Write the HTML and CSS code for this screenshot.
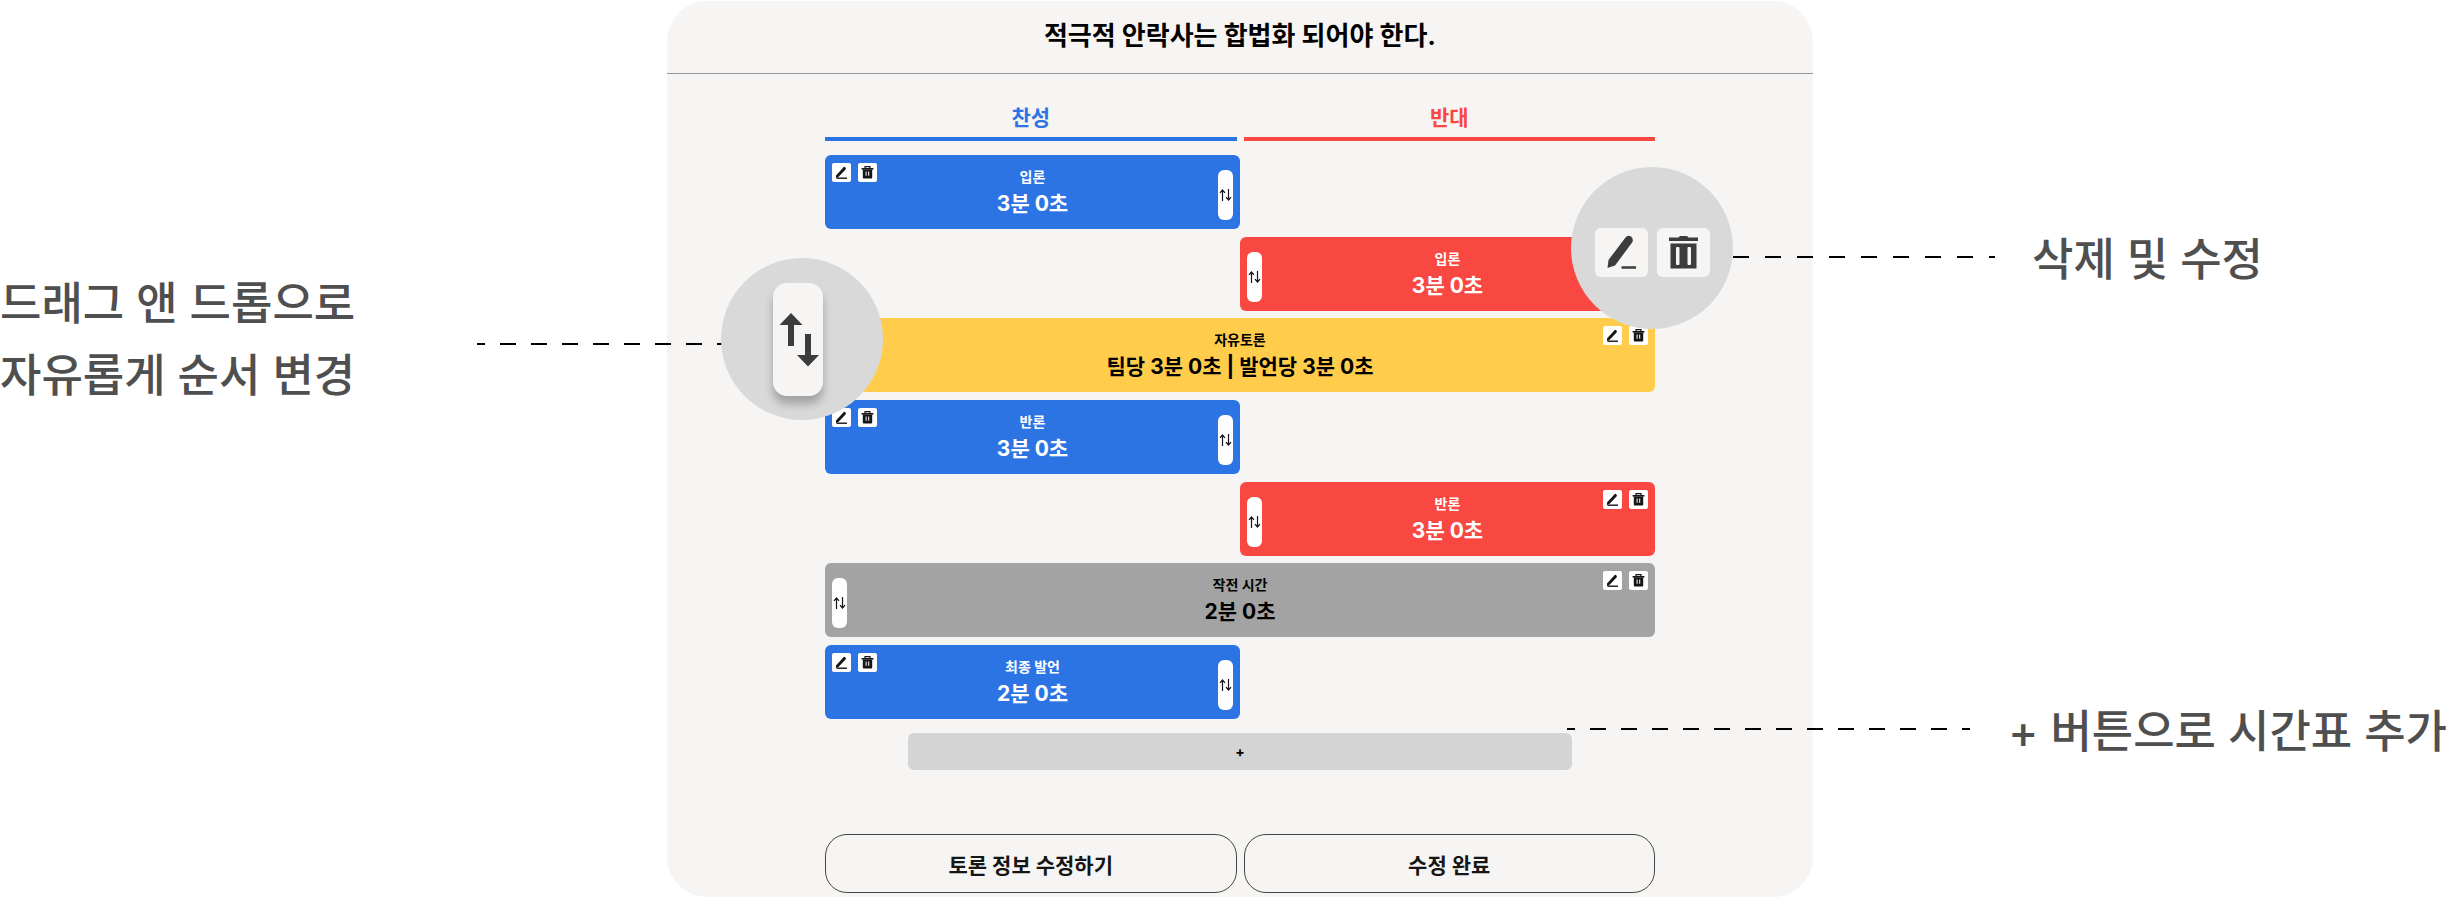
FILE: index.html
```html
<!DOCTYPE html>
<html lang="ko">
<head>
<meta charset="utf-8">
<meta name="viewport" content="width=device-width, initial-scale=1">
<title>토론 시간표</title>
<link rel="stylesheet" href="styles.css">
</head>
<body>
<svg class="sprite" aria-hidden="true">
  <symbol id="pencil" viewBox="0 0 19 19">
    <path d="M4 15V12.4L11.3 4.4Q12.2 3.4 13.2 4.3L13.6 4.7Q14.4 5.6 13.5 6.6L6.4 14Z" fill="#151515"/>
    <path d="M4.5 15.2H15" stroke="#151515" stroke-width="1.4"/>
  </symbol>
  <symbol id="trash" viewBox="0 0 19 19">
    <path d="M7 5V3.6H12V5" fill="none" stroke="#151515" stroke-width="1.2"/>
    <path d="M3.6 5H15.4V6.6H3.6Z" fill="#151515"/>
    <path fill-rule="evenodd" d="M4.8 6.6H14.2V14.6Q14.2 15.6 13.2 15.6H5.8Q4.8 15.6 4.8 14.6ZM7.6 8.6V12.8H8.6V8.6ZM10.2 8.6V12.8H11.2V8.6Z" fill="#151515"/>
  </symbol>
  <symbol id="swap" viewBox="0 0 15 14">
    <path d="M4.500 13V2M2 4.800L4.500 2L7 4.800M10.500 1V12M8 9.200L10.500 12L13 9.200" fill="none" stroke="#151515" stroke-width="1.2"/>
  </symbol>
</svg>

<main class="page">
  <aside class="side side-left">
    <p class="note">드래그 앤 드롭으로<br>자유롭게 순서 변경</p>
  </aside>

  <section class="panel">
    <header class="panel-head"><h1 class="title">적극적 안락사는 합법화 되어야 한다.</h1></header>
    <div class="board">
      <div class="teams">
        <h2 class="team team-pro">찬성</h2>
        <h2 class="team team-con">반대</h2>
      </div>

      <ol class="timeline">
        <li class="card pro">
          <div class="tools"><button class="tool" aria-label="수정"><svg><use href="#pencil"/></svg></button><button class="tool" aria-label="삭제"><svg><use href="#trash"/></svg></button></div>
          <div class="info"><span class="kind">입론</span><span class="time">3분 0초</span></div>
          <button class="handle" aria-label="순서 변경"><svg><use href="#swap"/></svg></button>
        </li>
        <li class="card con">
          <button class="handle" aria-label="순서 변경"><svg><use href="#swap"/></svg></button>
          <div class="info"><span class="kind">입론</span><span class="time">3분 0초</span></div>
          <div class="tools"><button class="tool" aria-label="수정"><svg><use href="#pencil"/></svg></button><button class="tool" aria-label="삭제"><svg><use href="#trash"/></svg></button></div>
        </li>
        <li class="card free">
          <button class="handle" aria-label="순서 변경"><svg><use href="#swap"/></svg></button>
          <div class="info"><span class="kind">자유토론</span><span class="time">팀당 3분 0초 | 발언당 3분 0초</span></div>
          <div class="tools"><button class="tool" aria-label="수정"><svg><use href="#pencil"/></svg></button><button class="tool" aria-label="삭제"><svg><use href="#trash"/></svg></button></div>
        </li>
        <li class="card pro">
          <div class="tools"><button class="tool" aria-label="수정"><svg><use href="#pencil"/></svg></button><button class="tool" aria-label="삭제"><svg><use href="#trash"/></svg></button></div>
          <div class="info"><span class="kind">반론</span><span class="time">3분 0초</span></div>
          <button class="handle" aria-label="순서 변경"><svg><use href="#swap"/></svg></button>
        </li>
        <li class="card con">
          <button class="handle" aria-label="순서 변경"><svg><use href="#swap"/></svg></button>
          <div class="info"><span class="kind">반론</span><span class="time">3분 0초</span></div>
          <div class="tools"><button class="tool" aria-label="수정"><svg><use href="#pencil"/></svg></button><button class="tool" aria-label="삭제"><svg><use href="#trash"/></svg></button></div>
        </li>
        <li class="card break">
          <button class="handle" aria-label="순서 변경"><svg><use href="#swap"/></svg></button>
          <div class="info"><span class="kind">작전 시간</span><span class="time">2분 0초</span></div>
          <div class="tools"><button class="tool" aria-label="수정"><svg><use href="#pencil"/></svg></button><button class="tool" aria-label="삭제"><svg><use href="#trash"/></svg></button></div>
        </li>
        <li class="card pro">
          <div class="tools"><button class="tool" aria-label="수정"><svg><use href="#pencil"/></svg></button><button class="tool" aria-label="삭제"><svg><use href="#trash"/></svg></button></div>
          <div class="info"><span class="kind">최종 발언</span><span class="time">2분 0초</span></div>
          <button class="handle" aria-label="순서 변경"><svg><use href="#swap"/></svg></button>
        </li>
      </ol>

      <button class="add">+</button>
      <div class="actions">
        <button class="action">토론 정보 수정하기</button>
        <button class="action">수정 완료</button>
      </div>
    </div>

    <svg class="leader leader-drag" aria-hidden="true"><line x1="0" y1="2" x2="100%" y2="2" stroke-dasharray="16 15" stroke-dashoffset="8"/></svg>
    <svg class="leader leader-edit" aria-hidden="true"><line x1="0" y1="2" x2="100%" y2="2" stroke-dasharray="16 16"/></svg>
    <svg class="leader leader-add" aria-hidden="true"><line x1="0" y1="2" x2="100%" y2="2" stroke-dasharray="16 15" stroke-dashoffset="8"/></svg>

    <div class="lens lens-drag" aria-hidden="true">
      <div class="big-handle">
        <svg class="big-swap" viewBox="0 0 50 113"><path d="M18 30L29.500 42H21V63H15V42H6.500ZM32 51H38V72H46L35 83.500L24 72H32Z" fill="#3c3c3c"/></svg>
      </div>
    </div>
    <div class="lens lens-edit" aria-hidden="true">
      <div class="big-tool"><svg viewBox="0 0 53 49"><path d="M12.500 40L13.500 32L30.500 9.500Q33 6.500 36 8.500Q38.500 10.500 37.500 14L20 37.500Z" fill="#3c3c3c"/><path d="M26.500 39.500H41" stroke="#3c3c3c" stroke-width="2.500"/></svg></div>
      <div class="big-tool"><svg viewBox="0 0 53 49"><path d="M12 9.500H21.500Q22 8 23.500 8H29.500Q31 8 31.500 9.500H41V13H12Z" fill="#3c3c3c"/><path fill-rule="evenodd" d="M13.500 15.500H39.500V40.500H13.500ZM20 19Q19 19 19 20V36Q19 37 20 37H21.500Q22.500 37 22.500 36V20Q22.500 19 21.500 19ZM31.500 19Q30.500 19 30.500 20V36Q30.500 37 31.500 37H33Q34 37 34 36V20Q34 19 33 19Z" fill="#3c3c3c"/></svg></div>
    </div>
  </section>

  <aside class="side side-right">
    <p class="note note-edit">삭제 및 수정</p>
    <p class="note note-add">+ 버튼으로 시간표 추가</p>
  </aside>
</main>
</body>
</html>
```

FILE: styles.css
```css
* {
  box-sizing: border-box;
}

body {
  margin: 0;
  background: #fff;
  color: #000;
  font-family: Inter, "Noto Sans CJK KR", sans-serif;
}

h1, h2, p, ol {
  margin: 0;
  padding: 0;
}

button {
  padding: 0;
  border: 0;
  font: inherit;
  color: inherit;
  cursor: pointer;
}

.sprite {
  position: absolute;
  width: 0;
  height: 0;
}

.page {
  display: grid;
  grid-template-columns: 667fr 1146fr 639fr;
  min-height: 100vh;
  padding-top: 1px;
}

/* Notes beside the panel */
.side {
  display: flex;
  flex-direction: column;
}

.side-left {
  padding-top: 267px;
}

.side-right {
  padding-top: 223px;
  padding-right: 5px;
  gap: 400px;
}

.note {
  color: #4f4f4f;
  font-size: 45px;
  font-weight: 500;
  line-height: 72px;
  white-space: nowrap;
}

.note-edit {
  padding-left: 219px;
}

.note-add {
  text-align: right;
}

/* Panel */
.panel {
  position: relative;
  display: flex;
  flex-direction: column;
  border-radius: 40px;
  background: #f6f5f3;
}

.panel-head {
  display: flex;
  align-items: center;
  justify-content: center;
  height: 73px;
  padding-bottom: 2px;
  border-bottom: 1px solid #999;
}

.title {
  font-size: 26px;
  font-weight: 700;
  line-height: 40px;
}

.board {
  display: flex;
  flex: 1;
  flex-direction: column;
  padding: 29px 158px 4px;
}

.teams {
  display: grid;
  grid-template-columns: 1fr 1fr;
  gap: 7px;
}

.team {
  padding-bottom: 4px;
  border-bottom: 4px solid;
  font-size: 21px;
  font-weight: 700;
  line-height: 30px;
  text-align: center;
}

.team-pro {
  color: #2c74e4;
}

.team-con {
  color: #f84841;
}

/* Timeline cards */
.timeline {
  display: flex;
  flex: 1;
  flex-direction: column;
  justify-content: space-between;
  margin: 14px 0;
  list-style: none;
}

.card {
  display: grid;
  grid-template-columns: 1fr auto 1fr;
  height: 74px;
  padding: 8px 7px;
  border-radius: 6px;
}

.pro,
.con {
  width: 50%;
  color: #fff;
}

.pro {
  background: #2c74e4;
}

.con {
  align-self: flex-end;
  background: #f84841;
}

.free {
  background: #ffcd4b;
}

.break {
  background: #a3a3a3;
}

.info {
  display: flex;
  flex-direction: column;
  align-items: center;
  padding-top: 4px;
}

.kind {
  font-size: 14px;
  font-weight: 700;
  line-height: 20px;
}

.time {
  font-size: 21px;
  font-weight: 700;
  line-height: 34px;
}

.tools {
  display: flex;
  align-items: flex-start;
  gap: 7px;
}

.tools:last-child {
  justify-content: flex-end;
}

.tool {
  width: 19px;
  height: 19px;
  border-radius: 2px;
  background: #fff;
}

.tool svg {
  display: block;
  width: 19px;
  height: 19px;
}

.handle {
  display: flex;
  align-items: center;
  justify-content: center;
  width: 15px;
  height: 50px;
  margin-top: 7px;
  border-radius: 6px;
  background: #fff;
}

.handle:last-child {
  justify-self: end;
}

.handle svg {
  width: 15px;
  height: 14px;
}

.add {
  align-self: center;
  width: 80%;
  height: 37px;
  margin-bottom: 64px;
  border-radius: 6px;
  background: #d4d4d4;
  font-size: 14px;
  font-weight: 700;
}

.actions {
  display: grid;
  grid-template-columns: 1fr 1fr;
  gap: 7px;
}

.action {
  height: 59px;
  border: 1px solid #454545;
  border-radius: 22px;
  background: transparent;
  color: #151515;
  font-size: 21px;
  font-weight: 700;
}

/* Leader lines and magnified controls lie over the panel */
.leader {
  position: absolute;
  height: 4px;
}

.leader line {
  stroke: #000;
  stroke-width: 2px;
}

.leader-drag {
  top: 341px;
  left: -190px;
  width: 245px;
}

.leader-edit {
  top: 254px;
  right: -182px;
  width: 262px;
}

.leader-add {
  top: 726px;
  right: -157px;
  width: 403px;
}

.lens {
  position: absolute;
  display: flex;
  align-items: center;
  justify-content: center;
  width: 162px;
  height: 162px;
  border-radius: 50%;
  background: #d9d9d9;
}

.lens-drag {
  top: 257px;
  left: 54px;
  padding-right: 8px;
}

.lens-edit {
  top: 166px;
  right: 80px;
  gap: 9px;
  padding-top: 8px;
}

.big-handle {
  width: 50px;
  height: 113px;
  border-radius: 14px;
  background: #f6f5f3;
  box-shadow: 0 8px 8px rgba(0, 0, 0, 0.25);
}

.big-swap {
  display: block;
  width: 50px;
  height: 113px;
}

.big-tool {
  width: 53px;
  height: 49px;
  border-radius: 6px;
  background: #f6f5f3;
}

.big-tool svg {
  display: block;
  width: 53px;
  height: 49px;
}
```
